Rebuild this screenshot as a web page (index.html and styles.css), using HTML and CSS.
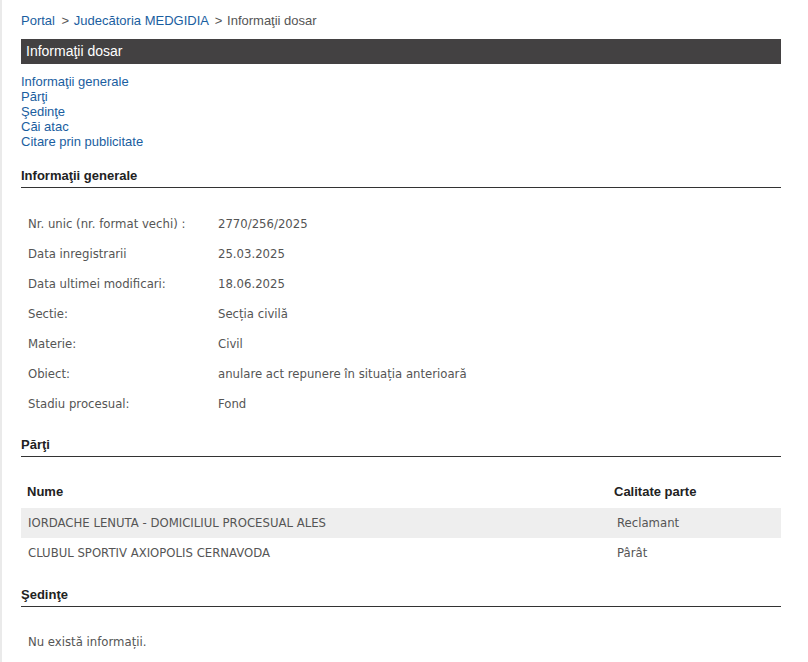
FILE: index.html
```html
<!DOCTYPE html>
<html lang="ro">
<head>
<meta charset="utf-8">
<link rel="stylesheet" href="styles.css">
</head>
<body>
<div class="edge"></div>
<div class="page">
  <div class="crumbs"><a href="#">Portal</a> <span class="sep">&gt;</span> <a href="#">Judecătoria MEDGIDIA</a> <span class="sep">&gt;</span> <span class="cur">Informaţii dosar</span></div>
  <div class="titlebar">Informaţii dosar</div>
  <ul class="toc">
    <li><a href="#">Informaţii generale</a></li>
    <li><a href="#">Părţi</a></li>
    <li><a href="#">Şedinţe</a></li>
    <li><a href="#">Căi atac</a></li>
    <li><a href="#">Citare prin publicitate</a></li>
  </ul>

  <h2 class="sect">Informaţii generale</h2>
  <table class="info">
    <tr><td class="lbl">Nr. unic (nr. format vechi) :</td><td>2770/256/2025</td></tr>
    <tr><td class="lbl">Data inregistrarii</td><td>25.03.2025</td></tr>
    <tr><td class="lbl">Data ultimei modificari:</td><td>18.06.2025</td></tr>
    <tr><td class="lbl">Sectie:</td><td>Secția civilă</td></tr>
    <tr><td class="lbl">Materie:</td><td>Civil</td></tr>
    <tr><td class="lbl">Obiect:</td><td>anulare act repunere în situația anterioară</td></tr>
    <tr><td class="lbl">Stadiu procesual:</td><td>Fond</td></tr>
  </table>

  <h2 class="sect sect-parti">Părţi</h2>
  <table class="parti">
    <thead><tr><th class="c1">Nume</th><th class="c2">Calitate parte</th></tr></thead>
    <tbody>
      <tr class="alt"><td>IORDACHE LENUTA - DOMICILIUL PROCESUAL ALES</td><td class="c2v">Reclamant</td></tr>
      <tr><td>CLUBUL SPORTIV AXIOPOLIS CERNAVODA</td><td class="c2v">Pârât</td></tr>
    </tbody>
  </table>

  <h2 class="sect sect-sed">Şedinţe</h2>
  <p class="none">Nu există informații.</p>
</div>
</body>
</html>
```

FILE: styles.css
```css
html, body { margin: 0; padding: 0; background: #fff; }
body { font-family: "Liberation Sans", Arial, sans-serif; font-size: 12px; color: #333; }
.edge { position: absolute; left: 0; top: 0; width: 2px; height: 662px; background: #eaeaea; }
.page { width: 760px; margin-left: 21px; padding-top: 13px; }
a { color: #1a5ea0; text-decoration: none; }
.crumbs { font-size: 13px; line-height: 16px; height: 26px; color: #555; }
.crumbs .sep { color: #555; margin: 0 1px 0 3px; }
.titlebar { background: #434142; color: #fff; font-size: 14px; height: 25px; line-height: 24px; padding-left: 5px; }
.toc { list-style: none; margin: 10px 0 0 0; padding: 0; font-size: 13px; line-height: 15px; }
.sect { font-size: 13px; font-weight: bold; color: #222; margin: 19px 0 0 0; padding-bottom: 4px; line-height: 15px; border-bottom: 1px solid #333; }
.info { border-collapse: collapse; margin-top: 21px; font-family: "DejaVu Sans", sans-serif; font-size: 11.7px; color: #555; }
.info td { height: 30px; padding: 0 0 0 7px; vertical-align: middle; }
.info td.lbl { width: 183px; }
.sect-parti { margin-top: 18px; }
.parti { width: 760px; border-collapse: collapse; margin-top: 21px; }
.parti th { text-align: left; font-size: 13px; font-weight: bold; color: #222; height: 30px; padding: 0 0 3px 6px; box-sizing: border-box; }
.parti th.c2 { width: 167px; padding-left: 0; }
.parti td { font-family: "DejaVu Sans", sans-serif; font-size: 11.7px; color: #555; height: 30px; padding: 0 0 0 7px; }
.parti td.c2v { padding-left: 3px; }
.parti tr.alt td { background: #eeeeee; }
.sect-sed { margin-top: 19px; }
.none { margin: 28px 0 0 7px; font-family: "DejaVu Sans", sans-serif; font-size: 11.7px; color: #555; }
```
